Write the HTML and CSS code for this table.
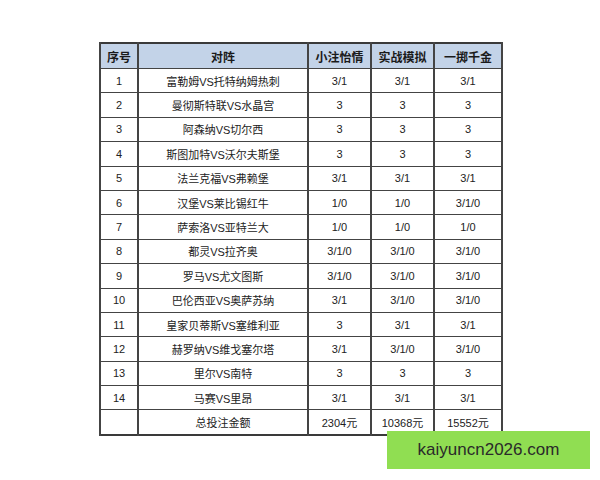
FILE: index.html
```html
<!DOCTYPE html>
<html lang="zh">
<head>
<meta charset="utf-8">
<link rel="stylesheet" href="styles.css">
</head>
<body>
<div class="page">
  <table class="bets">
    <colgroup>
      <col class="c-no"><col class="c-match"><col class="c-a"><col class="c-b"><col class="c-c">
    </colgroup>
    <thead>
      <tr><th>序号</th><th>对阵</th><th>小注怡情</th><th>实战模拟</th><th>一掷千金</th></tr>
    </thead>
    <tbody>
      <tr><td>1</td><td>富勒姆VS托特纳姆热刺</td><td>3/1</td><td>3/1</td><td>3/1</td></tr>
      <tr><td>2</td><td>曼彻斯特联VS水晶宫</td><td>3</td><td>3</td><td>3</td></tr>
      <tr><td>3</td><td>阿森纳VS切尔西</td><td>3</td><td>3</td><td>3</td></tr>
      <tr><td>4</td><td>斯图加特VS沃尔夫斯堡</td><td>3</td><td>3</td><td>3</td></tr>
      <tr><td>5</td><td>法兰克福VS弗赖堡</td><td>3/1</td><td>3/1</td><td>3/1</td></tr>
      <tr><td>6</td><td>汉堡VS莱比锡红牛</td><td>1/0</td><td>1/0</td><td>3/1/0</td></tr>
      <tr><td>7</td><td>萨索洛VS亚特兰大</td><td>1/0</td><td>1/0</td><td>1/0</td></tr>
      <tr><td>8</td><td>都灵VS拉齐奥</td><td>3/1/0</td><td>3/1/0</td><td>3/1/0</td></tr>
      <tr><td>9</td><td>罗马VS尤文图斯</td><td>3/1/0</td><td>3/1/0</td><td>3/1/0</td></tr>
      <tr><td>10</td><td>巴伦西亚VS奥萨苏纳</td><td>3/1</td><td>3/1/0</td><td>3/1/0</td></tr>
      <tr><td>11</td><td>皇家贝蒂斯VS塞维利亚</td><td>3</td><td>3/1</td><td>3/1</td></tr>
      <tr><td>12</td><td>赫罗纳VS维戈塞尔塔</td><td>3/1</td><td>3/1/0</td><td>3/1/0</td></tr>
      <tr><td>13</td><td>里尔VS南特</td><td>3</td><td>3</td><td>3</td></tr>
      <tr><td>14</td><td>马赛VS里昂</td><td>3/1</td><td>3/1</td><td>3/1</td></tr>
      <tr><td></td><td>总投注金额</td><td>2304元</td><td>10368元</td><td>15552元</td></tr>
    </tbody>
  </table>
  <div class="watermark">kaiyuncn2026.com</div>
</div>
</body>
</html>
```

FILE: styles.css
```css
html, body {
  margin: 0;
  padding: 0;
  background: #ffffff;
}

.page {
  position: relative;
  width: 600px;
  height: 480px;
  padding-top: 42px;
  box-sizing: border-box;
}

.bets {
  margin-left: 99px;
  width: 402px;
  border-collapse: collapse;
  table-layout: fixed;
  border: 2px solid #3a3a3a;
  font-family: "Liberation Sans", "Noto Sans CJK SC", sans-serif;
  font-size: 11px;
  color: #222222;
}

.c-no { width: 38px; }
.c-match { width: 170px; }
.c-a { width: 63px; }
.c-b { width: 63px; }
.c-c { width: 68px; }

.bets th,
.bets td {
  border-top: 1px solid #444444;
  border-bottom: 1px solid #444444;
  border-left: 2px solid #444444;
  border-right: 2px solid #444444;
  text-align: center;
  vertical-align: middle;
  padding: 0;
}

.bets th {
  height: 24px;
  background: #c3d3e8;
  font-size: 12px;
  font-weight: bold;
  color: #1a1a1a;
}

.bets td {
  height: 23.4px;
}

.watermark {
  position: absolute;
  left: 387px;
  top: 431px;
  width: 203px;
  height: 38px;
  background: #90de52;
  color: #2a2a2a;
  font-family: "Liberation Sans", sans-serif;
  font-size: 17px;
  display: flex;
  align-items: center;
  justify-content: center;
}
```
